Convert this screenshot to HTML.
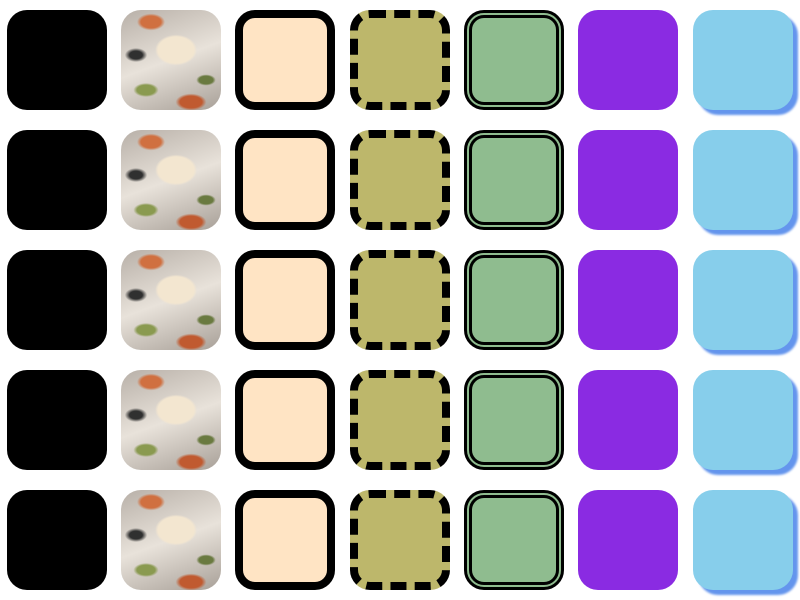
<!DOCTYPE html><html><head><style>
body{margin:0;width:800px;height:600px;background:#fff;position:relative;overflow:hidden}
.b{position:absolute;width:100px;height:100px;border-radius:20px;box-sizing:border-box}
.c0{background:#000}
.c1{background:radial-gradient(ellipse 30px 22px at 55% 40%,#f3e6d0 60%,transparent 70%),radial-gradient(ellipse 20px 12px at 30% 12%,#d07040 50%,transparent 70%),radial-gradient(ellipse 22px 12px at 70% 92%,#c05a30 50%,transparent 70%),radial-gradient(ellipse 18px 10px at 25% 80%,#8a9a50 50%,transparent 70%),radial-gradient(ellipse 16px 10px at 15% 45%,#303030 40%,transparent 70%),radial-gradient(ellipse 14px 8px at 85% 70%,#6a7a40 50%,transparent 70%),linear-gradient(160deg,#b8b0a8,#e8e2da 50%,#a8a098)}
.c2{background:#ffe4c4;border:8px solid #000}
.c3{background:#bdb76b;border:8px dashed #000}
.c4{background:#8fbc8f;border:8px double #000}
.c5{background:#8a2be2}
.c6{background:#87ceeb;box-shadow:5px 5px 2px #6495ed}
</style></head><body>
<script>
var xs=[7,121,235,350,464,578,693];
for(var r=0;r<5;r++)for(var c=0;c<7;c++){document.write('<div class="b c'+c+'" style="left:'+xs[c]+'px;top:'+(10+120*r)+'px"></div>');}
</script>
</body></html>
